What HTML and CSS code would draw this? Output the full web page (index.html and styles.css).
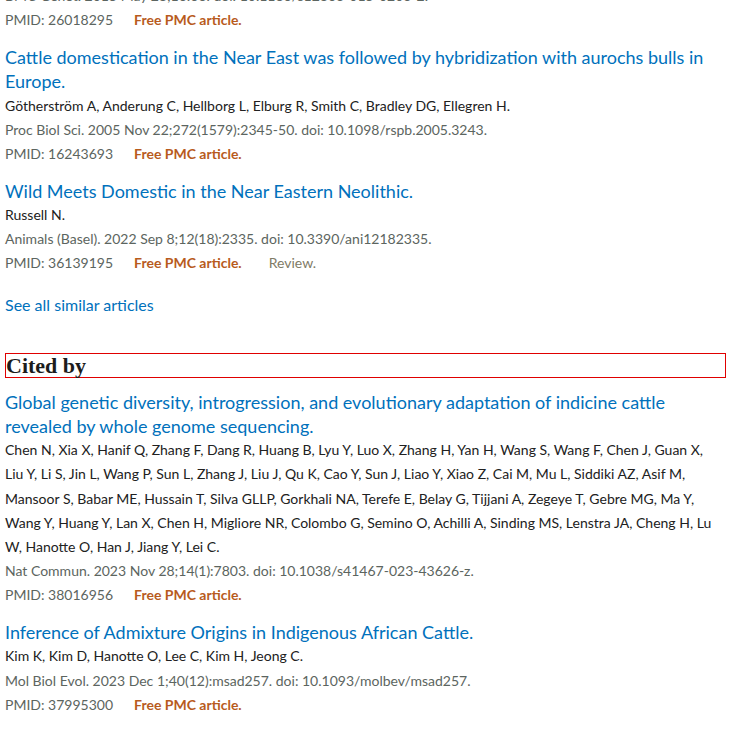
FILE: index.html
```html
<!DOCTYPE html>
<html lang="en">
<head>
<meta charset="utf-8">
<title>Similar articles and Cited by</title>
<link rel="stylesheet" href="styles.css">
</head>
<body>
<main class="page">
  <section class="similar">
    <div class="docsum docsum-partial">
      <div class="citation">BMC Genet. 2015 May 28;16:63. doi: 10.1186/s12863-015-0203-2.</div>
      <div class="meta"><span class="pmid">PMID: 26018295</span><span class="free">Free PMC article.</span></div>
    </div>
    <article class="docsum">
      <a class="title" href="#">Cattle domestication in the Near East was followed by hybridization with aurochs bulls in Europe.</a>
      <div class="authors">Götherström A, Anderung C, Hellborg L, Elburg R, Smith C, Bradley DG, Ellegren H.</div>
      <div class="citation">Proc Biol Sci. 2005 Nov 22;272(1579):2345-50. doi: 10.1098/rspb.2005.3243.</div>
      <div class="meta"><span class="pmid">PMID: 16243693</span><span class="free">Free PMC article.</span></div>
    </article>
    <article class="docsum">
      <a class="title" href="#">Wild Meets Domestic in the Near Eastern Neolithic.</a>
      <div class="authors">Russell N.</div>
      <div class="citation">Animals (Basel). 2022 Sep 8;12(18):2335. doi: 10.3390/ani12182335.</div>
      <div class="meta"><span class="pmid">PMID: 36139195</span><span class="free">Free PMC article.</span><span class="pubtype">Review.</span></div>
    </article>
    <a class="see-all" href="#">See all similar articles</a>
  </section>

  <section class="cited">
    <h2 class="heading">Cited by</h2>
    <article class="docsum">
      <a class="title" href="#">Global genetic diversity, introgression, and evolutionary adaptation of indicine cattle revealed by whole genome sequencing.</a>
      <div class="authors">Chen N, Xia X, Hanif Q, Zhang F, Dang R, Huang B, Lyu Y, Luo X, Zhang H, Yan H, Wang S, Wang F, Chen J, Guan X, Liu Y, Li S, Jin L, Wang P, Sun L, Zhang J, Liu J, Qu K, Cao Y, Sun J, Liao Y, Xiao Z, Cai M, Mu L, Siddiki AZ, Asif M, Mansoor S, Babar ME, Hussain T, Silva GLLP, Gorkhali NA, Terefe E, Belay G, Tijjani A, Zegeye T, Gebre MG, Ma Y, Wang Y, Huang Y, Lan X, Chen H, Migliore NR, Colombo G, Semino O, Achilli A, Sinding MS, Lenstra JA, Cheng H, Lu W, Hanotte O, Han J, Jiang Y, Lei C.</div>
      <div class="citation">Nat Commun. 2023 Nov 28;14(1):7803. doi: 10.1038/s41467-023-43626-z.</div>
      <div class="meta"><span class="pmid">PMID: 38016956</span><span class="free">Free PMC article.</span></div>
    </article>
    <article class="docsum">
      <a class="title" href="#">Inference of Admixture Origins in Indigenous African Cattle.</a>
      <div class="authors">Kim K, Kim D, Hanotte O, Lee C, Kim H, Jeong C.</div>
      <div class="citation">Mol Biol Evol. 2023 Dec 1;40(12):msad257. doi: 10.1093/molbev/msad257.</div>
      <div class="meta"><span class="pmid">PMID: 37995300</span><span class="free">Free PMC article.</span></div>
    </article>
  </section>
</main>
</body>
</html>
```
FILE: styles.css
```css
html, body {
  margin: 0;
  padding: 0;
  background: #ffffff;
}

body {
  font-family: Lato, "Open Sans", sans-serif;
  color: #212121;
  overflow: hidden;
}

.page {
  margin: -16px 5px 0 5px;
  width: 720px;
}

.docsum {
  display: flex;
  flex-direction: column;
}

.docsum + .docsum {
  margin-top: 12.5px;
}

.title {
  font-size: 18px;
  line-height: 24.3px;
  color: #0071bc;
  text-decoration: none;
}

.authors,
.citation,
.meta {
  font-size: 14px;
  line-height: 24.2px;
}

.authors {
  color: #212121;
  max-width: 716px;
}

.citation {
  color: #5c6560;
}

.meta {
  display: flex;
  color: #5c6560;
}

.free {
  margin-left: 21px;
  font-weight: 700;
  color: #b85b1d;
}

.pubtype {
  margin-left: 27px;
  color: #807b66;
}

.see-all {
  display: block;
  margin-top: 17px;
  font-size: 16px;
  line-height: 24px;
  color: #0071bc;
  text-decoration: none;
}

.cited {
  margin-top: 36px;
}

.heading {
  margin: 0 0 12px 0;
  border: 1px solid #e00000;
  font-family: "Liberation Serif", "DejaVu Serif", serif;
  font-weight: 700;
  font-size: 22px;
  line-height: 23px;
  color: #1c1c1c;
  width: 719px;
}
```
